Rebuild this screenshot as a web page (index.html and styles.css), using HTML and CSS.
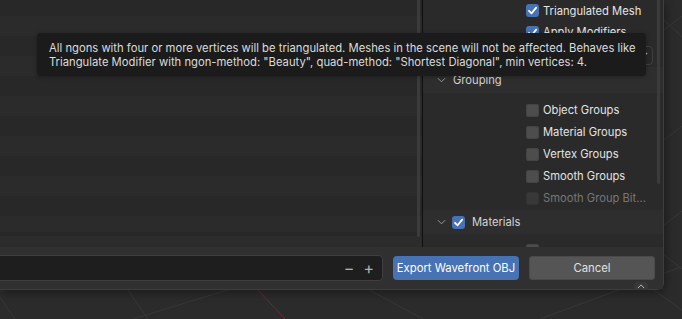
FILE: index.html
```html
<!DOCTYPE html>
<html>
<head>
<meta charset="utf-8">
<link rel="stylesheet" href="styles.css">
</head>
<body>
<svg class="viewport" width="682" height="319" viewBox="0 0 682 319">
  <line x1="-40" y1="240" x2="15" y2="319" class="grid"/>
  <line x1="100" y1="250" x2="148" y2="319" class="grid"/>
  <line x1="260" y1="280" x2="133" y2="319" class="grid"/>
  <line x1="360" y1="285" x2="423" y2="319" class="grid"/>
  <line x1="700" y1="260" x2="540" y2="319" class="grid"/>
  <line x1="640" y1="280" x2="690" y2="316" class="grid"/>
  <line x1="664" y1="30" x2="690" y2="10" class="grid"/>
  <line x1="664" y1="20" x2="690" y2="44" class="grid"/>
  <line x1="664" y1="140" x2="690" y2="120" class="grid"/>
  <line x1="664" y1="225" x2="690" y2="205" class="grid"/>
  <line x1="664" y1="255" x2="690" y2="275" class="grid"/>
  <line x1="230" y1="260" x2="285" y2="319" class="axis"/>
</svg>

<div class="dialog">
  <div class="main">
    <div class="list">
      <div class="rows"></div>
      <div class="list-fill"></div>
      <div class="vscroll"></div>
    </div>
    <div class="divider"></div>
    <div class="side">
      <div class="side-scroll"></div>
      <div class="opt first"><span class="cb on"><svg viewBox="0 0 13 13"><path d="M3 6.8 L5.6 9.3 L10.2 3.6"/></svg></span><span class="lbl">Triangulated Mesh</span></div>
      <div class="opt"><span class="cb on"><svg viewBox="0 0 13 13"><path d="M3 6.8 L5.6 9.3 L10.2 3.6"/></svg></span><span class="lbl">Apply Modifiers</span></div>
      <div class="field-row"><div class="field"><svg class="field-arrow" viewBox="0 0 6 6"><path d="M1 5 L5 1"/></svg></div></div>
      <div class="panel-head">
        <svg class="chev" viewBox="0 0 10 6"><path d="M1 1 L5 5 L9 1"/></svg>
        <span class="head-lbl">Grouping</span>
      </div>
      <div class="panel-body">
        <div class="opt"><span class="cb"></span><span class="lbl">Object Groups</span></div>
        <div class="opt"><span class="cb"></span><span class="lbl">Material Groups</span></div>
        <div class="opt"><span class="cb"></span><span class="lbl">Vertex Groups</span></div>
        <div class="opt"><span class="cb"></span><span class="lbl">Smooth Groups</span></div>
        <div class="opt disabled"><span class="cb"></span><span class="lbl">Smooth Group Bit...</span></div>
      </div>
      <div class="panel-head mat">
        <svg class="chev" viewBox="0 0 10 6"><path d="M1 1 L5 5 L9 1"/></svg>
        <span class="cb on"><svg viewBox="0 0 13 13"><path d="M3 6.8 L5.6 9.3 L10.2 3.6"/></svg></span>
        <span class="head-lbl">Materials</span>
      </div>
      <div class="panel-body tail">
        <div class="opt"><span class="cb"></span></div>
      </div>
    </div>
  </div>
  <div class="bottom">
    <div class="filename">
      <span class="pm">−</span>
      <span class="pm">+</span>
    </div>
    <button class="btn primary">Export Wavefront OBJ</button>
    <button class="btn">Cancel</button>
  </div>
  <div class="tab"><svg viewBox="0 0 10 6"><path d="M1 5 L5 1 L9 5"/></svg></div>
</div>

<div class="tooltip">All ngons with four or more vertices will be triangulated. Meshes in the scene will not be affected. Behaves like<br>Triangulate Modifier with ngon-method: "Beauty", quad-method: "Shortest Diagonal", min vertices: 4.</div>
</body>
</html>
```

FILE: styles.css
```css
html, body {
  margin: 0;
  padding: 0;
}
body {
  width: 682px;
  height: 319px;
  overflow: hidden;
  position: relative;
  background: #2b2b2b;
  font-family: Inter, "Noto Sans", "DejaVu Sans", sans-serif;
  font-size: 11.2px;
  color: #e4e4e4;
}
.viewport {
  position: absolute;
  left: 0;
  top: 0;
}
.grid {
  stroke: #373737;
  stroke-width: 1;
}
.axis {
  stroke: #6e2a33;
  stroke-width: 1;
}
.dialog {
  position: relative;
  width: 663px;
  height: 289px;
  display: flex;
  flex-direction: column;
  background: #2e2e2e;
  border-right: 1px solid #3e3e3e;
  border-bottom: 1px solid #3e3e3e;
  border-bottom-right-radius: 7px;
  box-shadow: 2px 3px 8px rgba(0,0,0,0.35);
}
.main {
  height: 247px;
  display: flex;
}
.list {
  position: relative;
  width: 422px;
  display: flex;
  flex-direction: column;
}
.rows {
  height: 236px;
  background: repeating-linear-gradient(to bottom, #282828 0 20px, #2b2b2b 20px 40px);
  background-position: 0 -4px;
}
.list-fill {
  flex: 1;
  background: #2c2c2c;
}
.vscroll {
  position: absolute;
  left: 417px;
  top: 0;
  width: 3px;
  height: 237px;
  background: #3b3b3b;
  border-radius: 0 0 2px 2px;
}
.divider {
  width: 1px;
  background: #0f0f0f;
}
.side {
  position: relative;
  width: 240px;
  background: #2a2a2a;
  display: flex;
  flex-direction: column;
  overflow: hidden;
}
.side-scroll {
  position: absolute;
  left: 234px;
  top: 0;
  width: 3px;
  height: 184px;
  background: #3b3b3b;
  border-radius: 0 0 2px 2px;
}
.opt {
  height: 22px;
  display: flex;
  align-items: center;
  padding-left: 103px;
  flex-shrink: 0;
}
.opt.first {
  height: 21px;
}
.cb {
  width: 13px;
  height: 13px;
  border-radius: 3px;
  background: #4d4d4d;
  box-shadow: inset 0 0 0 1px #444;
  flex-shrink: 0;
  display: flex;
}
.cb.on {
  background: #4772b3;
  box-shadow: none;
}
.cb svg {
  width: 13px;
  height: 13px;
}
.cb svg path {
  fill: none;
  stroke: #fff;
  stroke-width: 1.8;
  stroke-linecap: round;
  stroke-linejoin: round;
}
.lbl {
  margin-left: 4px;
  white-space: nowrap;
}
.disabled .cb {
  background: #383838;
  box-shadow: inset 0 0 0 1px #333;
}
.disabled .lbl {
  color: #777;
}
.field-row {
  height: 24px;
  display: flex;
  align-items: center;
  padding-left: 103px;
  padding-right: 10px;
  flex-shrink: 0;
}
.field {
  flex: 1;
  height: 17px;
  border: 1px solid #3f3f3f;
  border-radius: 4px;
  background: #282828;
  display: flex;
  align-items: center;
  justify-content: flex-end;
  padding-right: 4px;
}
.field-arrow {
  width: 6px;
  height: 6px;
}
.field-arrow path {
  stroke: #bbb;
  stroke-width: 1.2;
  fill: none;
}
.panel-head {
  height: 26px;
  display: flex;
  align-items: center;
  padding-left: 14px;
  background: #2e2e2e;
  flex-shrink: 0;
}
.panel-head.mat {
  height: 24px;
}
.chev {
  width: 9px;
  height: 6px;
  flex-shrink: 0;
}
.chev path {
  fill: none;
  stroke: #9a9a9a;
  stroke-width: 1.1;
}
.head-lbl {
  margin-left: 7px;
  color: #d4d4d4;
}
.panel-head.mat .cb {
  margin-left: 6px;
}
.panel-head.mat .head-lbl {
  margin-left: 7px;
}
.panel-body {
  padding-top: 6px;
  padding-bottom: 1px;
  background: #2a2a2a;
  flex-shrink: 0;
}
.panel-body.tail {
  padding-top: 5px;
}
.bottom {
  height: 42px;
  display: flex;
  align-items: flex-start;
  padding-top: 8px;
  box-sizing: border-box;
  gap: 10px;
  padding-right: 8px;
  background: #303030;
}
.filename {
  flex: 1;
  margin-left: -10px;
  height: 24px;
  border: 1px solid #3f3f3f;
  border-radius: 4px;
  background: #1e1e1e;
  display: flex;
  align-items: center;
  justify-content: flex-end;
  gap: 9px;
  padding-right: 8px;
}
.pm {
  color: #b0b0b0;
  font-size: 16px;
  line-height: 1;
}
.btn {
  width: 126px;
  height: 24px;
  margin-top: 1px;
  border: none;
  border-radius: 4px;
  background: #555555;
  color: #e0e0e0;
  font-family: Inter, "Noto Sans", "DejaVu Sans", sans-serif;
  font-size: 11.3px;
  padding: 0;
  box-shadow: inset 0 0 0 1px #4a4a4a;
}
.btn.primary {
  background: #4772b3;
  color: #ffffff;
  box-shadow: none;
}
.tab {
  position: absolute;
  left: 634px;
  top: 282px;
  width: 14px;
  height: 8px;
  background: #383838;
  border-radius: 4px 4px 0 0;
  display: flex;
  justify-content: center;
  align-items: center;
}
.tab svg {
  width: 8px;
  height: 5px;
}
.tab path {
  fill: none;
  stroke: #bbb;
  stroke-width: 1.2;
}
.tooltip {
  position: absolute;
  left: 37px;
  top: 33px;
  width: 609px;
  height: 43px;
  box-sizing: border-box;
  padding: 9px 0 0 12px;
  background: #1b1b1b;
  border-radius: 4px;
  box-shadow: 0 1px 4px rgba(0,0,0,0.3);
  color: #dcdcdc;
  font-size: 11.25px;
  line-height: 13.5px;
  white-space: nowrap;
}
```
